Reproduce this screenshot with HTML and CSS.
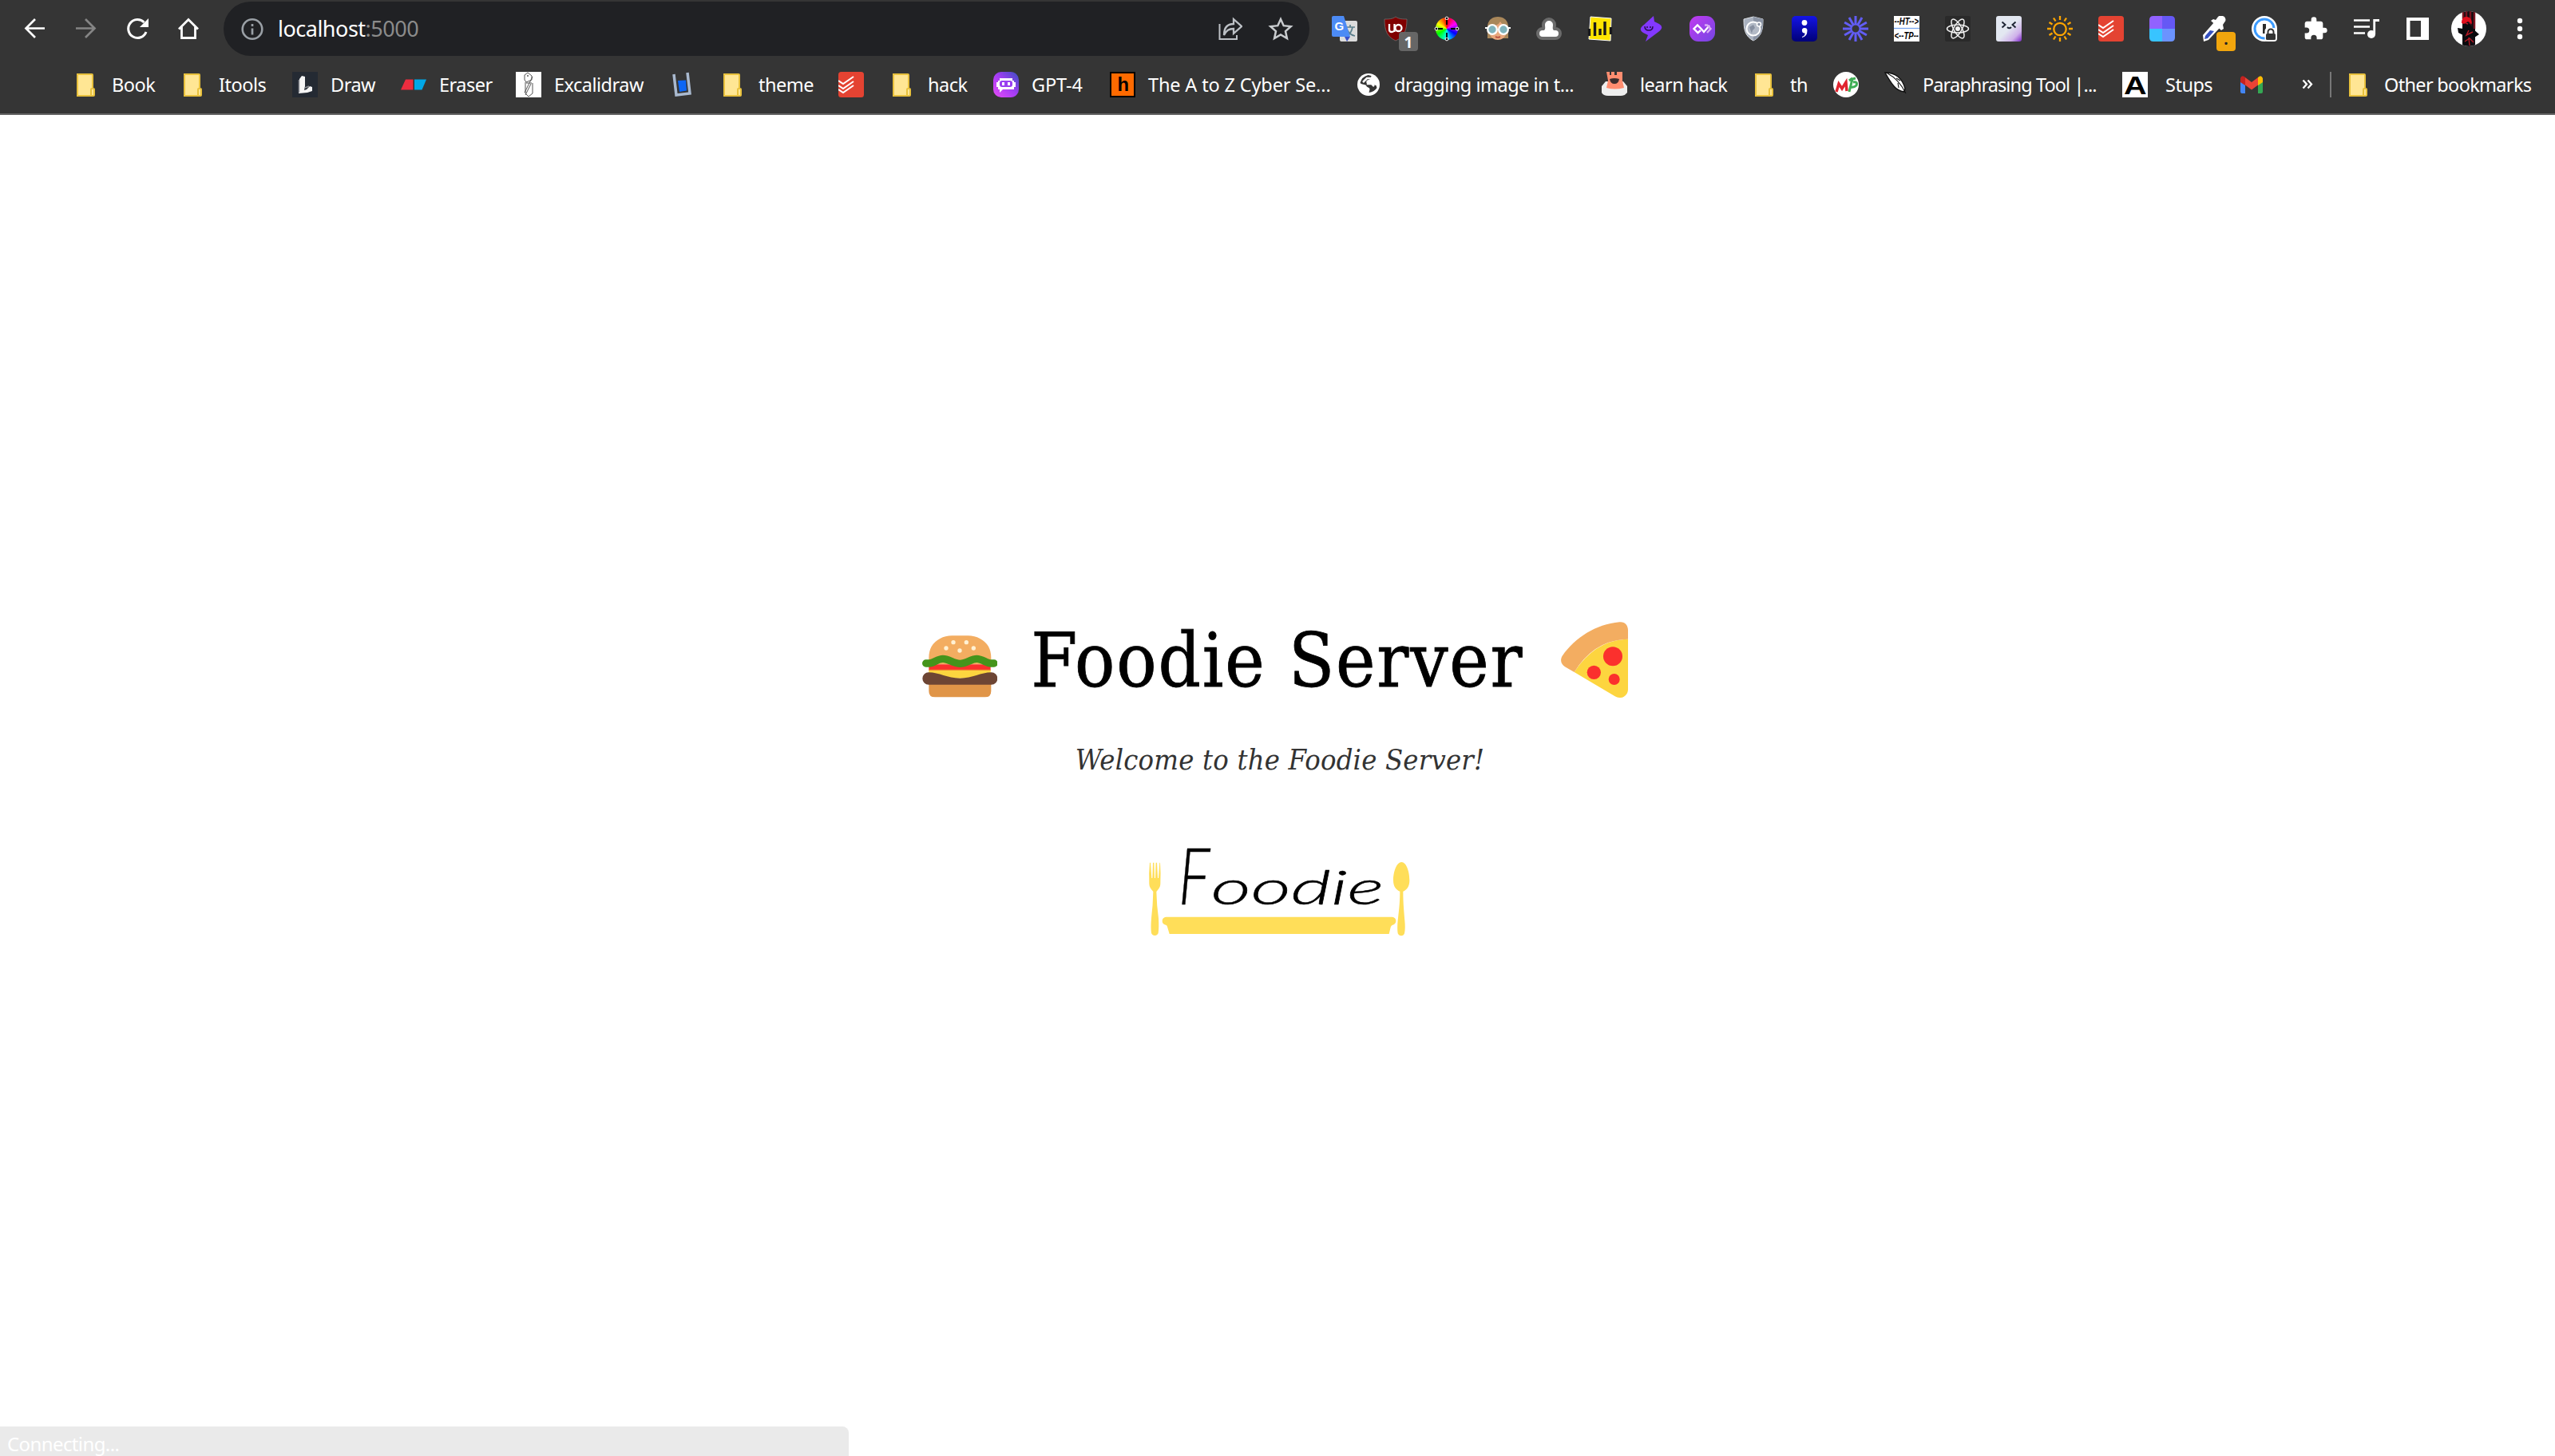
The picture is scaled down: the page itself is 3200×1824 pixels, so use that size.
FILE: index.html
```html
<!DOCTYPE html>
<html lang="en">
<head>
<meta charset="utf-8">
<title>Foodie Server</title>
<link rel="stylesheet" href="styles.css">
</head>
<body>
<svg class="defs" width="0" height="0">
  <symbol id="folder" viewBox="0 0 32 32"><path d="M5 3h18q1 0 1 1v17h1q1 0 1 1v7q0 1-1 1H5z" fill="#ffe694" stroke="#e8c13d" stroke-width="2"/><path d="M22 29v-7q0-1 1-1" fill="none" stroke="#e8c13d" stroke-width="2"/></symbol>
  <symbol id="todoist" viewBox="0 0 32 32"><rect width="32" height="32" rx="3.5" fill="#e44332"/><path d="M0 11l6 4L19 6M0 17l6 4 13-9M0 22l6 4 13-9" fill="none" stroke="#fff" stroke-width="2.1"/></symbol>
</svg>
<header class="chrome">
  <div class="toolbar">
    <nav class="nav">
      <svg class="ic" viewBox="0 0 32 32"><path d="M28 15.500H5M16 4L4.500 15.500 16 27" fill="none" stroke="#fff" stroke-width="2.700"/></svg>
      <svg class="ic" viewBox="0 0 32 32"><path d="M3 15.500h23M15 4l11.500 11.500L15 27" fill="none" stroke="#858585" stroke-width="2.700"/></svg>
      <svg class="ic" viewBox="0 0 32 32"><path d="M24.500 8A11.500 11.500 0 1 0 27 20" fill="none" stroke="#fff" stroke-width="3"/><path d="M30 3v11H19z" fill="#fff"/></svg>
      <svg class="ic" viewBox="0 0 32 32"><path d="M4 16.500L16 4.500l12 12M7.500 14v13.500h17V14" fill="none" stroke="#fff" stroke-width="2.800"/></svg>
    </nav>
    <div class="omnibox">
      <svg class="ic" viewBox="0 0 32 32"><circle cx="16" cy="16.500" r="12.300" fill="none" stroke="#9aa0a6" stroke-width="2.600"/><path d="M16 10v3M16 15.500v8" stroke="#9aa0a6" stroke-width="2.700"/></svg>
      <span class="url">localhost<span class="port">:5000</span></span>
      <svg class="ic" viewBox="0 0 32 32"><path d="M3.500 10v19H25v-5" fill="none" stroke="#bdc1c6" stroke-width="2"/><path d="M9 24C9 14 14 10 21 10V4l10 9-10 9v-6c-6 0-9 2-12 8z" fill="none" stroke="#bdc1c6" stroke-width="2.300"/></svg>
      <svg class="ic" viewBox="0 0 32 32"><path d="M16 4l3.700 8.200 9 .9-6.700 6 1.900 8.900-7.900-4.600L8.100 28 10 19.100l-6.700-6 9-.9z" fill="none" stroke="#c9cccf" stroke-width="2.500"/></svg>
    </div>
    <div class="exts">
      <svg class="ic" viewBox="0 0 32 32"><rect x="10" y="6" width="22" height="26" rx="2" fill="#dcdcdc"/><path d="M18 14h11M23 11v3M19 25c4-2 6-6 7-11M19 17c2 4 5 7 10 8" fill="none" stroke="#5b7f8c" stroke-width="1.700"/><path d="M16 26h7l-4 6z" fill="#3a50c8"/><path d="M2 0h13l8 26H2q-2 0-2-2V2q0-2 2-2z" fill="#4c8bf5"/><text x="3.500" y="18" class="glyph bold" font-size="15" fill="#fff">G</text></svg>
      <div class="badged"><svg class="ic" viewBox="0 0 32 32"><path d="M16 1c4 3 9 3 14 3 0 14-3 22-14 27C5 26 2 18 2 4c5 0 10 0 14-3z" fill="#800000" stroke="#777" stroke-width=".7"/><path d="M8 10v7q0 3 3 3t4-3M14.500 10v10" fill="none" stroke="#fff" stroke-width="2.300"/><circle cx="19.500" cy="15" r="4" fill="none" stroke="#fff" stroke-width="2.300"/></svg><span class="badge">1</span></div>
      <div class="ic wheel"><svg class="ic" viewBox="0 0 32 32"><g fill="#000" stroke="#fff" stroke-width="1"><circle cx="16" cy="3" r="1.900"/><circle cx="16" cy="29" r="1.900"/><circle cx="3" cy="16" r="1.900"/><circle cx="29" cy="16" r="1.900"/></g><path d="M16 5v6M16 21v6M5 16h6M21 16h6" stroke="#000" stroke-width="1.800"/></svg></div>
      <svg class="ic" viewBox="0 0 32 32"><path d="M3 28V14C3 5 9 1 16 1s13 4 13 13v14z" fill="#a9875a"/><path d="M5 13q11 0 14-6 3 5 8 6v8c-2 6-6 9-11 9S7 27 5 21z" fill="#e8a77c"/><circle cx="9" cy="17" r="5.800" fill="#7fb3bc" stroke="#fff" stroke-width="2.300"/><circle cx="23" cy="17" r="5.800" fill="#7fb3bc" stroke="#fff" stroke-width="2.300"/><path d="M0 15h4M28 15h4" stroke="#fff" stroke-width="2"/><path d="M13 26q3 1.500 6 0" stroke="#b5483a" fill="none" stroke-width="1.500"/></svg>
      <svg class="ic" viewBox="0 0 32 32"><path d="M8 26a4 4 0 0 1 0-8h2c2-2 1-4 1-7a5 5 0 0 1 10 0c0 3-1 5 1 7h2a4 4 0 0 1 0 8z" fill="#fff" stroke="#6b6b6b" stroke-width="8" stroke-linejoin="round" paint-order="stroke"/></svg>
      <svg class="ic" viewBox="0 0 32 32"><path d="M4 1l26 2-1 28-27-2z" fill="#ffe500" stroke="#fff"/><path d="M2.500 16v9M9.500 8v17M16 16v8M22 7v17M29.500 14v9" stroke="#1a1a1a" stroke-width="3.400"/></svg>
      <svg class="ic" viewBox="0 0 32 32"><path d="M18 0L6 11q-8 6-1 10l6 3-3 8 16-12q8-6 1-10l-6-3z" transform="translate(1)" fill="#8338ff"/><path d="M8 13q0 5 5 5t5-5M11 13v2M15 13v2" fill="none" stroke="#28104f" stroke-width="1.500"/></svg>
      <svg class="ic" viewBox="0 0 32 32"><defs><linearGradient id="g1" x2="1" y2="1"><stop stop-color="#c13af0"/><stop offset="1" stop-color="#7446e4"/></linearGradient></defs><rect width="32" height="32" rx="11" fill="url(#g1)"/><path d="M14 18l-3.500 3L5.500 16l4.500-4.500 5 5 3 3.500 7-8" fill="none" stroke="#fff" stroke-width="2.400"/><path d="M19 11.500h3l4.500 4.500-4.500 5" fill="none" stroke="#d9a9f5" stroke-width="2.400"/></svg>
      <svg class="ic" viewBox="0 0 32 32"><path d="M16 1l12 3c0 12-1 21-12 27C5 25 4 16 4 4z" fill="#a9b1bf" stroke="#dfe3e8"/><path d="M16 1l12 3c0 12-1 21-12 27z" fill="#8b94a5"/><circle cx="16" cy="16" r="8.500" fill="#b3bac6" stroke="#fff" stroke-width="2"/><path d="M11 14l5-3 2 4-3 3-1 4z" fill="#8790a1"/><circle cx="23" cy="10.500" r="2.500" fill="#8b94a5" stroke="#fff" stroke-width="1.500"/></svg>
      <svg class="ic" viewBox="0 0 32 32"><defs><linearGradient id="g2" x2="0" y2="1"><stop stop-color="#1414e6"/><stop offset="1" stop-color="#000078"/></linearGradient></defs><rect width="32" height="32" rx="5" fill="url(#g2)"/><circle cx="16" cy="8.500" r="3.400" fill="#fff"/><path d="M13 26q4-1.500 3.500-4.500a3.300 3.300 0 1 1 3-3.500q0 8-6.500 9z" fill="#fff"/></svg>
      <svg class="ic" viewBox="0 0 32 32"><circle cx="16" cy="16" r="5.500" fill="none" stroke="#625df5" stroke-width="2"/><g stroke="#625df5" stroke-width="3"><path d="M16 0v10M16 22v10M0 16h10M22 16h10M8 2.100l5 8.700M19 21.200l5 8.700M2.100 8l8.700 5M21.200 19l8.700 5M24 2.100l-5 8.700M13 21.200l-5 8.700M29.900 8l-8.700 5M10.800 19l-8.700 5"/></g></svg>
      <svg class="ic" viewBox="0 0 32 32"><rect width="32" height="32" fill="#fff"/><path d="M0 15.500h32" stroke="#79a7f0" stroke-width="1.300"/><text x="0.500" y="10.500" class="glyph bolditalic" font-size="12" textLength="30.500" lengthAdjust="spacingAndGlyphs">--HT--&gt;</text><text x="0.500" y="28.500" class="glyph bolditalic" font-size="12" textLength="30.500" lengthAdjust="spacingAndGlyphs">&lt;--TP--</text></svg>
      <svg class="ic" viewBox="0 0 32 32"><rect width="32" height="32" rx="2" fill="#2a2a2a"/><g fill="none" stroke="#f2f2f2" stroke-width="1.500"><ellipse cx="16" cy="16" rx="13.500" ry="5"/><ellipse cx="16" cy="16" rx="13.500" ry="5" transform="rotate(60 16 16)"/><ellipse cx="16" cy="16" rx="13.500" ry="5" transform="rotate(120 16 16)"/></g><circle cx="16" cy="16" r="3" fill="#f2f2f2"/></svg>
      <svg class="ic" viewBox="0 0 32 32"><defs><linearGradient id="g3" x2="1" y2="1"><stop offset=".5" stop-color="#e3e8f1"/><stop offset=".78" stop-color="#cfb0ea"/><stop offset="1" stop-color="#7b28c8"/></linearGradient></defs><rect width="32" height="32" rx="3" fill="url(#g3)"/><path d="M7.500 7.500l4 3.500-4 3.500M24.500 7.500l-4 3.500 4 3.500M14 14q2.500 2.500 5 0" fill="none" stroke="#1d2433" stroke-width="1.900"/></svg>
      <svg class="ic" viewBox="0 0 32 32"><g fill="none" stroke="#ffa500" stroke-width="2.300"><circle cx="16" cy="16.500" r="7.700"/><path d="M16 0v5M16 27v5M0 16h5M27 16h5M8 2.500l2.500 4M21.500 25.500l2.500 4M2.500 8l4 2.500M25.500 21.500l4 2.500M24 2.500l-2.500 4M10.500 25.500L8 29.500M29.500 8l-4 2.500M6.500 21.500l-4 2.500"/></g></svg>
      <svg class="ic"><use href="#todoist"/></svg>
      <svg class="ic" viewBox="0 0 32 32"><path d="M16 0v16H0V5q0-5 5-5z" fill="#9162ff"/><path d="M16 0h11q5 0 5 5v11H16z" fill="#6558f5"/><path d="M0 16h16v16H5q-5 0-5-5z" fill="#38c4ff"/><path d="M16 16h16v11q0 5-5 5H16z" fill="#6b93ff"/></svg>
      <div class="badged"><svg class="ic" viewBox="0 0 32 32"><path d="M3 24L17 8l7 7L10 30l-6 2z" fill="#fff"/><path d="M6 25l6-7 5 1-8 9-4 1z" fill="#3450c0"/><path d="M13 6l3-2 3 1 3-4q3-3 8 0 3 4 0 7l-2 3 1 5-3 2z" fill="#fff"/></svg><span class="badge amber">.</span></div>
      <svg class="ic" viewBox="0 0 32 32"><circle cx="16" cy="16" r="16" fill="#fff"/><circle cx="16" cy="16" r="12" fill="#fff" stroke="#3b9bff" stroke-width="3"/><path d="M16 10v12" stroke="#2b2b2b" stroke-width="4"/><rect x="16.500" y="15" width="15.500" height="17" rx="4" fill="#fff"/><rect x="18" y="22" width="12" height="8" rx="1.500" fill="#333"/><path d="M20.500 22v-2a3.500 3.500 0 0 1 7 0v2" fill="none" stroke="#333" stroke-width="2"/></svg>
      <svg class="ic" viewBox="0 0 24 24"><path fill="#fff" d="M20.500 11H19V7c0-1.100-.9-2-2-2h-4V3.500a2.500 2.500 0 0 0-5 0V5H4c-1.100 0-2 .9-2 2v3.800h1.500a2.700 2.700 0 0 1 0 5.400H2V20c0 1.100.9 2 2 2h3.800v-1.500a2.700 2.700 0 0 1 5.400 0V22H17c1.100 0 2-.9 2-2v-4h1.500a2.500 2.500 0 0 0 0-5z"/></svg>
      <svg class="ic" viewBox="0 0 32 32"><path d="M0 5.500h20M0 13.500h20M0 21.500h14" stroke="#fff" stroke-width="2.700"/><circle cx="22" cy="23" r="5" fill="#fff"/><path d="M25.700 23V5.500H32" fill="none" stroke="#fff" stroke-width="2.800"/></svg>
      <svg class="ic" viewBox="0 0 32 32"><path d="M2 2h28v28H2zM6.500 6v20H20V6z" fill="#fff" fill-rule="evenodd"/></svg>
      <svg class="avatar" viewBox="0 0 44 44"><defs><clipPath id="av"><circle cx="22" cy="22" r="22"/></clipPath></defs><g clip-path="url(#av)"><rect width="44" height="44" fill="#fff"/><path d="M14 0h16v44H14z" fill="#120d12"/><path d="M15 0v10M19 0v8M24 0v24M29 0v22" stroke="#7b1420" stroke-width="2.500"/><path d="M13 15q0-9 7-8 6 1 6 9l-5-3-5 3z" fill="#e10f1d"/><path d="M8 21l7 1 2-6h7l3 6 8 7-6 4-4-3v12H15V30l-6-3z" fill="#0a0a0d"/><path d="M18 15l3 1M22 24l-3 6 8-4M17 38l6-4 5 5M22 33l1 10" stroke="#b01824" stroke-width="1.500" fill="none"/></g></svg>
      <svg class="ic" viewBox="0 0 32 32"><g fill="#fff"><circle cx="16" cy="6" r="3.200"/><circle cx="16" cy="16" r="3.200"/><circle cx="16" cy="26" r="3.200"/></g></svg>
    </div>
  </div>
  <div class="bookmarks">
    <div class="bm"><svg class="ic"><use href="#folder"/></svg><span>Book</span></div>
    <div class="bm"><svg class="ic"><use href="#folder"/></svg><span>Itools</span></div>
    <div class="bm"><svg class="ic" viewBox="0 0 32 32"><rect width="32" height="32" fill="#242a33"/><path d="M9 9l3-4 4 1v12l-1 5 3-1 4-4 3 1v5l-6 2-11 1z" fill="#f6f6f6"/><path d="M8.500 10v16M16 20l5-2" stroke="#8a8d92" stroke-width="1.500"/></svg><span>Draw</span></div>
    <div class="bm"><svg class="ic" viewBox="0 0 32 32"><path d="M6 9.500h9.500v13H0z" fill="#ec2d3f"/><path d="M17 9.500h15l-5.500 13H17z" fill="#00a8e8"/></svg><span>Eraser</span></div>
    <div class="bm"><svg class="ic" viewBox="0 0 32 32"><rect width="32" height="32" fill="#fff"/><path d="M11 4l4-3 5 4v5l-7 3-2-3zM12 13v14l4 4 5-4V14M21 6L11 26M19 15l-7 14M13 14h7" fill="none" stroke="#555" stroke-width="1"/><circle cx="15" cy="5" r="1" fill="#555"/></svg><span>Excalidraw</span></div>
    <div class="bm"><svg class="ic" viewBox="0 0 32 32"><path d="M6 3l3 26 17-2-3-26" fill="none" stroke="#a9b9cf" stroke-width="3.500"/><path d="M11 11l10-.5 1 13-9 1.500z" fill="#0c66f5"/></svg></div>
    <div class="bm"><svg class="ic"><use href="#folder"/></svg><span>theme</span></div>
    <div class="bm"><svg class="ic"><use href="#todoist"/></svg></div>
    <div class="bm"><svg class="ic"><use href="#folder"/></svg><span>hack</span></div>
    <div class="bm"><svg class="ic" viewBox="0 0 32 32"><defs><linearGradient id="g4" y1="1" x2="1" y2="0"><stop stop-color="#e64cf5"/><stop offset=".5" stop-color="#a63df5"/><stop offset="1" stop-color="#3a4fc0"/></linearGradient></defs><rect width="32" height="32" rx="10" fill="url(#g4)"/><path d="M8 8h16v3h2v2h2v6h-2v3H12l-4 4v-4H6v-3H4v-6h2v-2h2z" fill="#fff"/><rect x="8" y="11" width="16" height="8" rx="3" fill="#9a3ff0"/><path d="M12.500 13v4M19.500 13v4" stroke="#fff" stroke-width="3"/></svg><span class="loose">GPT-4</span></div>
    <div class="bm"><svg class="ic" viewBox="0 0 32 32"><rect width="32" height="32"/><rect x="2" y="2" width="28" height="28" fill="#ff6a00"/><text x="16.500" y="24" text-anchor="middle" class="glyph bold" font-size="24" textLength="14" lengthAdjust="spacingAndGlyphs">h</text></svg><span class="loose">The A to Z Cyber Se...</span></div>
    <div class="bm"><svg class="ic" viewBox="0 0 32 32"><circle cx="16" cy="16" r="14" fill="#fff"/><path d="M5.500 14c4 3 7 1 8 4 1 2 4 1 4 4l-1 4q7-1 10-6l-1-3-4-1-2-2h-6v-3l5-2 1-4-4-1q-8 2-10 10z" fill="#353535"/><path d="M9 13l5-5h5v3l-4 2v2h5l3 3" fill="none" stroke="#fff" stroke-width="2.500"/></svg><span>dragging image in t...</span></div>
    <div class="bm"><svg class="ic" viewBox="0 0 32 32"><path d="M0 18l5-6h22l5 6v8q-3 4-8 4H8q-6 0-8-4z" fill="#eee"/><path d="M6 0h4v4h2V0h4v4h3V0h7v11l2 9q-12 3-22 0l2-9z" fill="#ff8d70"/><path d="M10 9q6-2 12 0-1 6-6 6t-6-6z" fill="#3b2e2e"/></svg><span>learn hack</span></div>
    <div class="bm"><svg class="ic"><use href="#folder"/></svg><span>th</span></div>
    <div class="bm"><svg class="ic" viewBox="0 0 32 32"><circle cx="16" cy="16" r="16" fill="#fff"/><path d="M4 25l3-10 4 6 5-8 1 11" fill="none" stroke="#e0242f" stroke-width="3.500"/><path d="M20 25l4-16 4-1M20 11l4-3M25 13q6-1 4 4-3 3-7 2" fill="none" stroke="#3fae55" stroke-width="3"/></svg></div>
    <div class="bm"><svg class="ic" viewBox="0 0 32 32"><path d="M1 1q10 0 16 5 7 6 9 15l-1 4q-8-1-13-7Q7 12 1 1z" fill="#fff" stroke="#111" stroke-width="1.500"/><path d="M4 2q14 7 23 25M17 14l1 6M15 8l5 3" fill="none" stroke="#111" stroke-width="1.100"/></svg><span class="tight">Paraphrasing Tool |...</span></div>
    <div class="bm wide"><svg class="ic" viewBox="0 0 32 32"><rect width="32" height="32" fill="#fff"/><text x="16" y="27.500" text-anchor="middle" class="glyph bold" font-size="32" textLength="28" lengthAdjust="spacingAndGlyphs">A</text></svg><span>Stups</span></div>
    <div class="bm"><svg class="ic" viewBox="0 0 32 32"><path d="M2 10h6v17H4q-2 0-2-2z" fill="#4285f4"/><path d="M24 10h6v15q0 2-2 2h-4z" fill="#34a853"/><path d="M2 13V8q1-4 5-2l1 1v10z" fill="#c5221f"/><path d="M24 17V7q4-4 6 1v5z" fill="#fbbc04"/><path d="M8 7l8 6 8-6v9.500l-8 6-8-6z" fill="#ea4335"/></svg></div>
    <div class="bm"><svg class="ic" viewBox="0 0 32 32"><path d="M4.500 10.500l4.500 5-4.500 5M10.500 10.500l4.500 5-4.500 5" fill="none" stroke="#fff" stroke-width="2.300"/></svg></div>
    <div class="rule"></div>
    <div class="bm"><svg class="ic"><use href="#folder"/></svg><span class="snug">Other bookmarks</span></div>
  </div>
</header>
<main class="page">
  <div class="title">
    <svg class="burger" viewBox="74 106 284 234"><path d="M99 285h234v30q0 23-23 23H122q-23 0-23-23z" fill="#e09548"/><path d="M99 215V190q0-50 42-72 20-11 45-11h60q25 0 45 11 42 22 42 72v25z" fill="#f3ad61"/><path d="M99 215h232v22H99z" fill="#fb302d"/><path d="M99 237h232v30H99z" fill="#fdd53f"/><path d="M99 236h232" stroke="#f08a35" stroke-width="4"/><path d="M98 245c40 0 70 22 118 22s78-22 118-22a23 23 0 0 1 0 46H98a23 23 0 0 1 0-46z" fill="#6d4534"/><path d="M88 211h12c18 0 30-17 52-17s40 18 64 18 42-18 63-18 37 17 53 17h12" fill="none" stroke="#45941b" stroke-width="28" stroke-linecap="round"/><g fill="#fff1d3"><circle cx="191" cy="132" r="8"/><circle cx="240" cy="132" r="8"/><circle cx="164" cy="154" r="8"/><circle cx="215" cy="163" r="8"/><circle cx="267" cy="154" r="8"/></g></svg>
    <h1>Foodie Server</h1>
    <svg class="pizza" viewBox="1095 54 252 286"><path d="M1145 243q78-122 202-124v188c0 27-26 40-49 27z" fill="#fdd53f"/><path d="M1347 119q-128 2-202 124l-35-20c-15-9-19-26-10-41C1150 112 1225 64 1315 55c20-2 32 12 32 30z" fill="#f3ad61"/><circle cx="1290" cy="184" r="36" fill="#fb302d"/><circle cx="1219" cy="244" r="26" fill="#fb302d"/><circle cx="1295" cy="270" r="21" fill="#fb302d"/></svg>
  </div>
  <p class="welcome">Welcome to the Foodie Server!</p>
  <svg class="logo" viewBox="0 0 1110 450"><g fill="#ffde59"><path d="M60 122h3l4 58h3l2-58h4l2 58h3l2-58h4l3 58h3l4-58h2q3 40 1 80 0 14-15 29 1 50 8 100 2 36-1 56-4 9-13 9t-13-9q-3-20 0-56 6-50 7-100-15-15-15-29-2-40 2-80z"/><path d="M1006 120c18 0 30 35 30 68 0 24-10 36-24 42 0 50 4 80 6 110q3 30-1 48-3 9-12 9t-13-9q-3-18 0-48c3-30 8-60 8-110-14-6-25-18-25-42 0-33 13-68 31-68z"/><path d="M121 326H971a14.500 14.500 0 0 1 14 15q0 12-14 16-4 2-6 8l-6 25H134l-8-27q-1-6-6-7-13-3-13-15a15 15 0 0 1 14-15z"/></g><text class="script" x="168" y="280" font-size="295" textLength="118" lengthAdjust="spacingAndGlyphs">F</text><text class="script" x="290" y="280" font-size="180" textLength="650" lengthAdjust="spacingAndGlyphs">oodie</text></svg>
</main>
<footer class="status">Connecting...</footer>
</body>
</html>
```
FILE: styles.css
```css
* { box-sizing: border-box; }
body {
  margin: 0;
  width: 3200px;
  height: 1824px;
  display: flex;
  flex-direction: column;
  overflow: hidden;
  background: #fff;
  font-family: "Noto Sans", "Open Sans", sans-serif;
}
.defs { position: absolute; }
svg { display: block; }
.ic { width: 32px; height: 32px; flex: none; }
.glyph { font-family: "Liberation Sans", sans-serif; }
.bold { font-weight: 700; }
.bolditalic { font-weight: 700; font-style: italic; }

.chrome { flex: none; height: 144px; background: #353535; border-bottom: 2px solid #626262; }
.toolbar { display: flex; height: 72px; align-items: center; padding-left: 28px; }
.nav { display: flex; gap: 32px; width: 252px; }
.omnibox {
  display: flex;
  align-items: center;
  width: 1360px;
  height: 68px;
  padding: 0 20px;
  border-radius: 34px;
  background: #202124;
}
.omnibox .ic + .ic { margin-left: 32px; }
.url { flex: 1; padding-left: 16px; font-size: 27px; line-height: 36px; letter-spacing: -0.5px; color: #fff; }
.port { color: #8b8b8b; }
.exts { display: flex; align-items: center; gap: 32px; padding-left: 28px; }
.badged { position: relative; flex: none; }
.badge {
  position: absolute;
  left: 20px;
  top: 20px;
  width: 24px;
  height: 24px;
  border-radius: 4px;
  background: #666;
  color: #fff;
  font-size: 19px;
  font-weight: 700;
  line-height: 26px;
  text-align: center;
}
.amber { background: #f2a60d; color: #222; line-height: 18px; }
.wheel {
  background: radial-gradient(circle, transparent 13.500px, #353535 14.500px),
    conic-gradient(red, #f0f, #00f, #0ff, #0f0, #ff0, red);
}
.avatar { width: 44px; height: 44px; margin: 0 -6px; flex: none; }

.bookmarks {
  display: grid;
  grid-template-columns: 134px 140px 136px 144px 192px 64px 148px 64px 130px 146px 308px 308px 188px 102px 64px 298px 146px 76px 38px 20px 1fr;
  height: 68px;
  padding: 0 0 0 92px;
  align-items: center;
}
.bm {
  display: flex;
  align-items: center;
  gap: 16px;
  height: 32px;
  color: #fff;
  font-size: 23.500px;
  line-height: 32px;
  letter-spacing: -0.500px;
  white-space: nowrap;
}
.wide { gap: 22px; }
.loose { letter-spacing: -0.150px; }
.snug { letter-spacing: -0.680px; }
.tight { letter-spacing: -0.900px; }
.rule { width: 2px; height: 32px; background: #777; }

.page { flex: 1; display: flex; flex-direction: column; align-items: center; padding-top: 634px; }
.title { display: flex; height: 96px; align-items: flex-end; margin-right: 6px; }
.burger { width: 94.670px; height: 78px; }
.pizza { width: 84px; height: 95.330px; }
h1 {
  width: 706px;
  margin: 0 0 -14px;
  padding-left: 42px;
  font: 400 93px/120px "Roboto Slab", "DejaVu Serif Condensed", "DejaVu Serif", serif;
  letter-spacing: 1.800px;
  -webkit-text-stroke: 0.800px #000;
  white-space: nowrap;
  color: #000;
}
.welcome {
  margin: 52px 0 0 6px;
  font: italic 400 36px/52px "Roboto Slab", "DejaVu Serif Condensed", "DejaVu Serif", serif;
  letter-spacing: 0.200px;
  color: #333;
}
.logo { width: 370px; height: 150px; margin: 62px 0 0 10px; }
.script {
  font-family: "Lato", sans-serif;
  font-style: italic;
  font-weight: 300;
  fill: #000;
  stroke: #000;
  stroke-width: 1.500px;
}

.status {
  flex: none;
  width: 1063px;
  height: 37px;
  padding-left: 9px;
  border-top-right-radius: 8px;
  background: #eaeaea;
  color: #fff;
  font-size: 24px;
  line-height: 44px;
  letter-spacing: -0.600px;
}
```
